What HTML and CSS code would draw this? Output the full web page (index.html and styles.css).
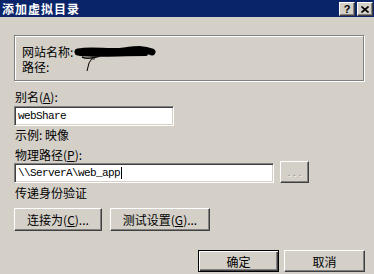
FILE: index.html
```html
<!DOCTYPE html>
<html lang="zh-CN">
<head>
    <meta charset="UTF-8">
    <title>添加虚拟目录</title>
    <link rel="stylesheet" href="styles.css">
</head>
<body>
    <div class="dialog">
        <div class="titlebar">
            <span class="title">添加虚拟目录</span>
            <div class="caption-btns">
                <div class="caption-btn help">?</div>
                <div class="caption-btn close">
                    <svg width="8" height="7" viewBox="0 0 8 7">
                        <path d="M0.5 0.5 L7.5 6.5 M7.5 0.5 L0.5 6.5" stroke="#000" stroke-width="1.6" fill="none"/>
                    </svg>
                </div>
            </div>
        </div>

        <div class="content">
            <div class="group">
                <div class="info">网站名称:<br>路径:</div>
                <!-- 涂抹掉的站点名称 -->
                <svg class="scribble" width="84" height="28" viewBox="0 0 84 28">
                    <path d="M4 6 C18 3, 34 7, 50 5 S70 3, 78 6" stroke="#000" stroke-width="7" stroke-linecap="round" fill="none"/>
                    <path d="M6 8 C22 10, 44 8, 72 8" stroke="#000" stroke-width="4" stroke-linecap="round" fill="none"/>
                    <path d="M8 11 C12 13, 20 12, 26 10" stroke="#111" stroke-width="1.5" fill="none"/>
                    <path d="M19 11 L15 17 L13 25" stroke="#000" stroke-width="1" fill="none"/>
                    <path d="M17 13 L21 13" stroke="#333" stroke-width="1" fill="none"/>
                </svg>
            </div>

            <div class="label first">别名(<u>A</u>):</div>
            <div class="field short"><span class="val">webShare</span></div>

            <div class="label example">示例: 映像</div>

            <div class="label path">物理路径(<u>P</u>):</div>
            <div class="path-row">
                <div class="field long"><span class="val caret">\\ServerA\web_app</span></div>
                <div class="btn browse"><span class="dim">. . .</span></div>
            </div>

            <div class="label auth">传递身份验证</div>

            <div class="btn-row">
                <div class="btn connect">连接为(<u>C</u>)...</div>
                <div class="btn test">测试设置(<u>G</u>)...</div>
            </div>

            <div class="footer">
                <div class="btn ok default">确定</div>
                <div class="btn cancel">取消</div>
            </div>
        </div>
    </div>
</body>
</html>
```

FILE: styles.css
```css
* {
    margin: 0;
    padding: 0;
    box-sizing: border-box;
}
body {
    background-color: #d4d0c8;
    font-family: "Noto Sans CJK SC", "Liberation Sans", sans-serif;
    font-size: 12px;
    color: #000;
}
.dialog {
    width: 374px;
    height: 274px;
    overflow: hidden;
}

/* 标题栏 */
.titlebar {
    height: 17px;
    background-color: #0a246a;
    display: flex;
    justify-content: space-between;
    padding-left: 2px;
}
.title {
    color: #fff;
    font-weight: bold;
    font-size: 12px;
    line-height: 17px;
    letter-spacing: 1px;
}
.caption-btns {
    display: flex;
    gap: 2px;
    padding: 2px 1px 0 0;
}
.caption-btn {
    width: 16px;
    height: 14px;
    background-color: #d4d0c8;
    border: 1px solid;
    border-color: #fff #404040 #404040 #fff;
    box-shadow: inset -1px -1px 0 #808080;
    display: flex;
    align-items: center;
    justify-content: center;
}
.help {
    font-family: "Liberation Sans", sans-serif;
    font-weight: bold;
    font-size: 11px;
    line-height: 11px;
}

/* 主体 */
.content {
    padding: 0 9px 0 14px;
}
.group {
    position: relative;
    margin-top: 18px;
    width: 350px;
    height: 46px;
    border: 1px solid #808080;
    box-shadow: 1px 1px 0 #fff, inset 1px 1px 0 #fff;
    padding: 8px 0 0 7px;
}
.info {
    line-height: 15px;
}
.scribble {
    position: absolute;
    left: 59px;
    top: 10px;
}

.label {
    line-height: 15px;
    padding-left: 1px;
}
.label.first {
    margin-top: 8px;
}
.label.example {
    margin-top: 1px;
}
.label.path {
    margin-top: 5px;
}
.label.auth {
    margin-top: 2px;
}

/* 输入框 */
.field {
    height: 20px;
    background-color: #fff;
    border: 1px solid;
    border-color: #808080 #fff #fff #808080;
    box-shadow: inset 1px 1px 0 #404040, inset -1px -1px 0 #d4d0c8;
    padding: 0 0 0 3px;
    font-family: "Liberation Mono", monospace;
    font-size: 11px;
    letter-spacing: -0.6px;
    line-height: 18px;
    white-space: nowrap;
}
.field.short {
    margin-top: 2px;
    width: 160px;
}
.field.long {
    width: 260px;
}
.caret {
    border-right: 1px solid #000;
    padding-right: 1px;
}
.path-row {
    display: flex;
    margin-top: 1px;
    height: 20px;
}

/* 按钮 */
.btn {
    background-color: #d4d0c8;
    border: 1px solid;
    border-color: #fff #404040 #404040 #fff;
    box-shadow: inset -1px -1px 0 #808080;
    display: flex;
    align-items: center;
    justify-content: center;
    line-height: 15px;
    white-space: nowrap;
}
.browse {
    width: 29px;
    height: 22px;
    margin: -2px 0 0 6px;
}
.dim {
    color: #808080;
    text-shadow: 1px 1px 0 #fff;
    font-family: "Liberation Sans", sans-serif;
    font-size: 10px;
}
.btn-row {
    display: flex;
    gap: 8px;
    margin-top: 8px;
}
.btn-row .btn {
    height: 23px;
}
.connect {
    width: 88px;
}
.test {
    width: 100px;
}
.footer {
    display: flex;
    justify-content: flex-end;
    gap: 5px;
    margin-top: 19px;
}
.footer .btn {
    width: 81px;
    height: 22px;
}
.btn.default {
    border-color: #000;
    box-shadow: inset 1px 1px 0 #fff, inset -1px -1px 0 #404040, inset -2px -2px 0 #808080;
}
```
